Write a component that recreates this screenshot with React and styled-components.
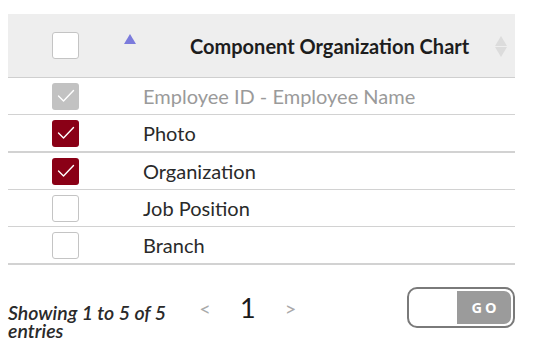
import React from 'react';
import styled, { createGlobalStyle } from 'styled-components';

const GlobalStyle = createGlobalStyle`
  body {
    margin: 0;
    padding: 14px 29px 0 8px;
    font-family: Lato, "Open Sans", sans-serif;
    background: #fff;
  }
`;

const Table = styled.div`
  width: 507px;
  display: flex;
  flex-direction: column;
`;

const HeaderRow = styled.div`
  display: flex;
  align-items: center;
  height: 63px;
  background: #eeeeee;
  border-bottom: 1px solid #cfcfcf;
`;

const Row = styled.div`
  display: flex;
  align-items: center;
  height: 36px;
  border-bottom: ${(p) => (p.$thick ? 2 : 1)}px solid #d2d2d2;
`;

const CheckCell = styled.div`
  width: 115px;
  flex: none;
  display: flex;
  justify-content: center;
  position: relative;
  align-self: stretch;
  align-items: center;
`;

const SortUp = styled.span`
  position: absolute;
  left: 116px;
  top: 20px;
  width: 0;
  height: 0;
  border-left: 6px solid transparent;
  border-right: 6px solid transparent;
  border-bottom: 10px solid #7b7bdc;
`;

const Box = styled.span`
  width: 27px;
  height: 27px;
  box-sizing: border-box;
  border-radius: 3px;
  display: flex;
  align-items: center;
  justify-content: center;
  background: ${(p) => (p.$disabled ? '#c2c2c2' : p.$checked ? '#8a0016' : '#fff')};
  border: ${(p) => (p.$checked || p.$disabled ? 'none' : '1px solid #c4c4c4')};
`;

const TitleCell = styled.div`
  flex: 1;
  display: flex;
  align-items: center;
  padding-left: 67px;
  padding-right: 8px;
  font-size: 20px;
  font-weight: 700;
  color: #1d1d1d;
`;

const TitleText = styled.span`
  flex: 1;
`;

const SortBoth = styled.span`
  display: flex;
  flex-direction: column;
  gap: 1px;
  margin-top: 2px;
`;

const Tri = styled.span`
  width: 0;
  height: 0;
  border-left: 6px solid transparent;
  border-right: 6px solid transparent;
  ${(p) => (p.$down ? 'border-top' : 'border-bottom')}: 10px solid #dcdcdc;
`;

const Label = styled.div`
  padding-left: 20px;
  font-size: 20px;
  color: ${(p) => (p.$disabled ? '#9a9a9a' : '#2a2a2a')};
`;

const Footer = styled.div`
  width: 507px;
  display: flex;
  align-items: flex-start;
  margin-top: 22px;
`;

const Info = styled.div`
  width: 172px;
  font-size: 19.5px;
  font-style: italic;
  font-weight: 600;
  line-height: 18px;
  color: #2a2a2a;
  margin-top: 17px;
`;

const Pager = styled.div`
  height: 41px;
  display: flex;
  align-items: center;
  margin-left: 19px;
`;

const Arrow = styled.span`
  font-size: 20px;
  color: #aaaaaa;
  width: 12px;
  text-align: center;
`;

const PageNum = styled.span`
  font-size: 27px;
  color: #1a1a1a;
  margin: 0 29px;
`;

const GoToggle = styled.div`
  margin-left: auto;
  width: 108px;
  height: 41px;
  box-sizing: border-box;
  border: 2px solid #7a7a7a;
  border-radius: 10px;
  display: flex;
  justify-content: flex-end;
  padding: 2px;
  background: #fff;
`;

const GoButton = styled.span`
  width: 51px;
  background: #9b9b9b;
  border-radius: 0 7px 7px 0;
  color: #fff;
  font-family: "Open Sans", Lato, sans-serif;
  font-weight: 700;
  font-size: 14.5px;
  letter-spacing: 3px;
  display: flex;
  align-items: center;
  justify-content: center;
  padding-left: 3px;
`;

function Check() {
  return (
    <svg width="18" height="14" viewBox="0 0 18 14" fill="none">
      <path d="M1.5 7 L6.5 12 L16.5 1.5" stroke="#fff" strokeWidth="1.4" strokeLinecap="round" strokeLinejoin="round" />
    </svg>
  );
}

const rows = [
  { label: 'Employee ID - Employee Name', checked: true, disabled: true },
  { label: 'Photo', checked: true, thick: true },
  { label: 'Organization', checked: true },
  { label: 'Job Position', checked: false },
  { label: 'Branch', checked: false, thick: true },
];

export default function App() {
  return (
    <>
      <GlobalStyle />
      <Table>
        <HeaderRow>
          <CheckCell>
            <Box />
            <SortUp />
          </CheckCell>
          <TitleCell>
            <TitleText>Component Organization Chart</TitleText>
            <SortBoth>
              <Tri />
              <Tri $down />
            </SortBoth>
          </TitleCell>
        </HeaderRow>
        {rows.map((r) => (
          <Row key={r.label} $thick={r.thick}>
            <CheckCell>
              <Box $checked={r.checked} $disabled={r.disabled}>
                {r.checked && <Check />}
              </Box>
            </CheckCell>
            <Label $disabled={r.disabled}>{r.label}</Label>
          </Row>
        ))}
      </Table>
      <Footer>
        <Info>Showing 1 to 5 of 5 entries</Info>
        <Pager>
          <Arrow>&lt;</Arrow>
          <PageNum>1</PageNum>
          <Arrow>&gt;</Arrow>
        </Pager>
        <GoToggle>
          <GoButton>GO</GoButton>
        </GoToggle>
      </Footer>
    </>
  );
}
